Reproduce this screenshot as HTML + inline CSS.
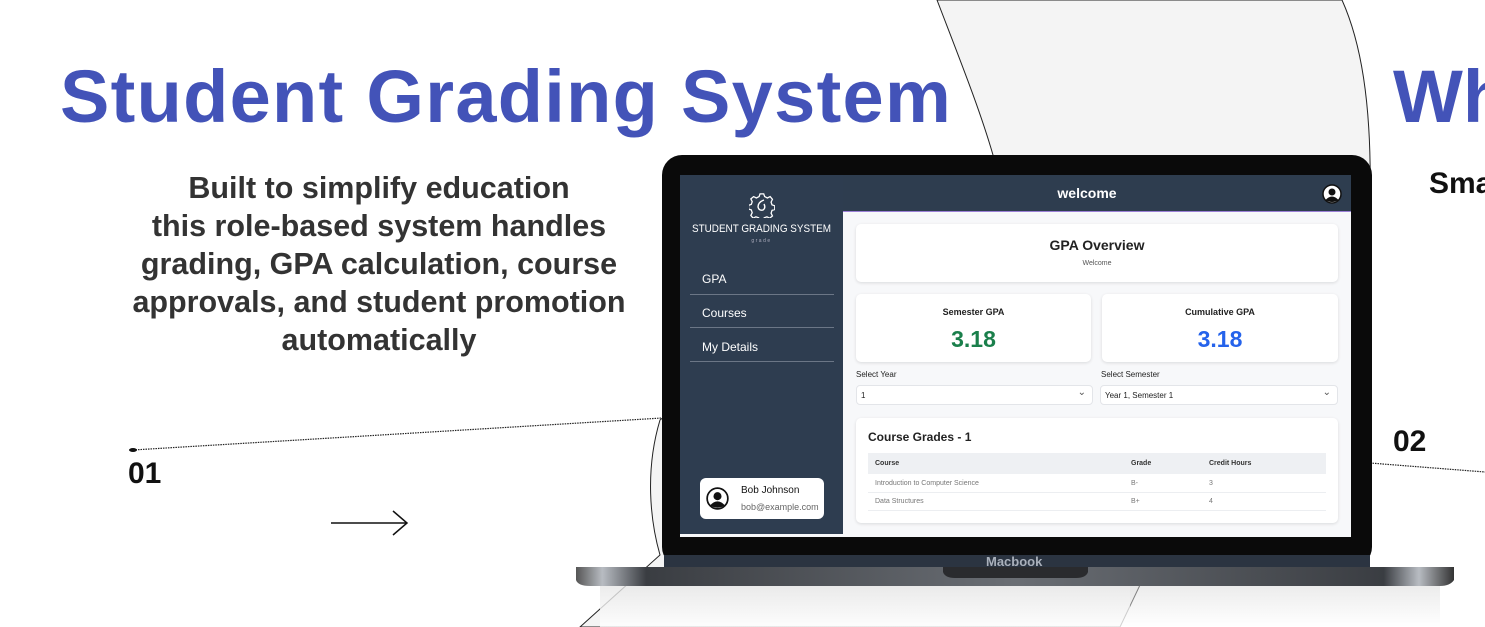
<!DOCTYPE html>
<html><head><meta charset="utf-8">
<style>
*{margin:0;padding:0;box-sizing:border-box}
body{width:1485px;height:627px;overflow:hidden;background:#fff;font-family:"Liberation Sans",sans-serif;position:relative}
.a{position:absolute;white-space:nowrap}
.card{position:absolute;background:#fff;border-radius:5px;box-shadow:0 1px 3px rgba(0,0,0,.12)}
.sel{position:absolute;background:#fff;border:1px solid #e3e5e9;border-radius:4px;font-size:8px;color:#222;padding:0 0 0 4px;line-height:19px}
.sel:after{content:"⌄";position:absolute;right:6px;top:-3px;font-size:10px;color:#555}
</style></head><body>
<svg class="a" style="left:0;top:0" width="1485" height="627">
<defs><linearGradient id="sh" x1="0" y1="0" x2="0" y2="1"><stop offset="0" stop-color="#d8d8d8"/><stop offset="1" stop-color="#fff"/></linearGradient>
<linearGradient id="base" x1="0" y1="0" x2="1" y2="0"><stop offset="0" stop-color="#555"/><stop offset=".03" stop-color="#b8bcc2"/><stop offset=".08" stop-color="#3a3d42"/><stop offset=".5" stop-color="#6a6e74"/><stop offset=".92" stop-color="#3a3d42"/><stop offset=".96" stop-color="#b8bcc2"/><stop offset="1" stop-color="#333"/></linearGradient></defs>
<path d="M937,0 C960,60 980,110 993,155 L660,420 C645,470 650,520 660,555 L580,627 L1120,627 L1140,585 L1370,200 C1372,100 1360,40 1342,0 Z" fill="#f4f4f4" stroke="#222" stroke-width="1"/>
<rect x="600" y="585" width="530" height="42" fill="#fff" opacity=".6"/>
<path d="M133,450 L662,418" stroke="#222" stroke-width="1.2" stroke-dasharray="1.5 1"/>
<ellipse cx="133" cy="450" rx="4" ry="2" fill="#111"/>
<path d="M1370,463 L1485,472" stroke="#222" stroke-width="1.2" stroke-dasharray="1.5 1"/>
<path d="M331,523 H407 M393,511 L407,523 L393,535" stroke="#111" stroke-width="1.5" fill="none"/>
<rect x="600" y="585" width="840" height="42" fill="url(#sh)" opacity=".5"/>
<rect x="662" y="155" width="710" height="412" rx="20" fill="#0a0a0a"/>
<rect x="664" y="555" width="706" height="12" fill="#2b3441"/>
<path d="M576,567 H1454 V580 Q1450,586 1440,586 H590 Q578,586 576,580 Z" fill="url(#base)"/>
<path d="M943,567 H1088 V572 Q1086,578 1076,578 H955 Q945,578 943,572 Z" fill="#2a2b2e"/>
</svg>
<div class="a" style="left:986px;top:554px;font-size:13px;color:#a9b0bb;font-weight:bold">Macbook</div>

<div class="a" style="left:60px;top:54px;font-size:74px;font-weight:bold;color:#4353b8;letter-spacing:1.3px">Student Grading System</div>
<div class="a" style="left:1393px;top:54px;font-size:74px;font-weight:bold;color:#4353b8">Wh</div>
<div class="a" style="left:1429px;top:167px;font-size:30px;font-weight:bold;color:#111">Sma</div>
<div class="a" style="left:1393px;top:425px;font-size:30px;font-weight:bold;color:#111">02</div>
<div class="a" style="left:128px;top:457px;font-size:30px;font-weight:bold;color:#111">01</div>
<div class="a" style="left:79px;top:169px;width:600px;text-align:center;font-size:30.5px;line-height:38px;color:#333;font-weight:bold;white-space:normal">Built to simplify education<br>this role-based system handles<br>grading, GPA calculation, course<br>approvals, and student promotion<br>automatically</div>

<!-- screen -->
<div class="a" style="left:680px;top:175px;width:671px;height:362px;background:#f7f8fa"></div>
<div class="a" style="left:680px;top:175px;width:163px;height:359px;background:#2e3d50"></div>
<div class="a" style="left:843px;top:175px;width:508px;height:37px;background:#2e3d4f;border-bottom:1px solid #9b7fd6"></div>
<div class="a" style="left:843px;top:185px;width:488px;text-align:center;color:#fff;font-weight:bold;font-size:14px">welcome</div>
<svg class="a" style="left:1322px;top:184px" width="20" height="20" viewBox="0 0 20 20"><circle cx="10" cy="10" r="9" fill="#fff" stroke="#111" stroke-width="1.5"/><circle cx="10" cy="8" r="3.5" fill="#111"/><path d="M3.5,16 Q10,9 16.5,16 Q10,20 3.5,16Z" fill="#111"/></svg>
<svg class="a" style="left:749px;top:192px" width="26" height="26" viewBox="0 0 26 26"><path d="M11,2 h4 l1,3 l3,1.5 l3,-1.5 l2.5,3 l-1.5,3 l1,3 l3,1 v4 l-3,1 l-1,3 l1.5,3 l-3,2.5 l-3,-1.5 l-3,1 l-1,3 h-4 l-1,-3 l-3,-1 l-3,1.5 l-2.5,-3 l1.5,-3 l-1,-3 l-3,-1 v-4 l3,-1 l1,-3 l-1.5,-3 l3,-2.5 l3,1.5 l3,-1.5 z" fill="none" stroke="#fff" stroke-width="1.4" transform="scale(.92) translate(1,0)"/><path d="M15,8 Q9,10 9,15 Q10,19 14,18 Q17,16 15,12" fill="none" stroke="#fff" stroke-width="1.4"/></svg>
<div class="a" style="left:680px;top:223px;width:163px;text-align:center;color:#fff;font-size:11px;transform:scaleX(.9)">STUDENT GRADING SYSTEM</div>
<div class="a" style="left:680px;top:238px;width:163px;text-align:center;color:#aab;font-size:5px;letter-spacing:1.5px">grade</div>
<div class="a" style="left:702px;top:272px;color:#fff;font-size:12px">GPA</div>
<div class="a" style="left:690px;top:294px;width:144px;height:1px;background:#6b7686"></div>
<div class="a" style="left:702px;top:306px;color:#fff;font-size:12px">Courses</div>
<div class="a" style="left:690px;top:327px;width:144px;height:1px;background:#6b7686"></div>
<div class="a" style="left:702px;top:340px;color:#fff;font-size:12px">My Details</div>
<div class="a" style="left:690px;top:361px;width:144px;height:1px;background:#6b7686"></div>
<div class="a" style="left:700px;top:478px;width:124px;height:41px;background:#fff;border-radius:6px"></div>
<svg class="a" style="left:706px;top:487px" width="23" height="23" viewBox="0 0 20 20"><circle cx="10" cy="10" r="9" fill="#fff" stroke="#111" stroke-width="1.5"/><circle cx="10" cy="8" r="3.5" fill="#111"/><path d="M3.5,16 Q10,9 16.5,16 Q10,20 3.5,16Z" fill="#111"/></svg>
<div class="a" style="left:741px;top:485px;font-size:10px;color:#111">Bob Johnson</div>
<div class="a" style="left:741px;top:502px;font-size:9px;color:#666">bob@example.com</div>

<div class="card" style="left:856px;top:224px;width:482px;height:58px"></div>
<div class="a" style="left:856px;top:237px;width:482px;text-align:center;font-size:14px;font-weight:bold;color:#222">GPA Overview</div>
<div class="a" style="left:856px;top:260px;width:482px;text-align:center;font-size:7px;color:#555">Welcome</div>
<div class="card" style="left:856px;top:294px;width:235px;height:68px"></div>
<div class="card" style="left:1102px;top:294px;width:236px;height:68px"></div>
<div class="a" style="left:856px;top:307px;width:235px;text-align:center;font-size:9px;font-weight:bold;color:#222">Semester GPA</div>
<div class="a" style="left:1102px;top:307px;width:236px;text-align:center;font-size:9px;font-weight:bold;color:#222">Cumulative GPA</div>
<div class="a" style="left:856px;top:326px;width:235px;text-align:center;font-size:23px;font-weight:bold;color:#1a7f4b">3.18</div>
<div class="a" style="left:1102px;top:326px;width:236px;text-align:center;font-size:23px;font-weight:bold;color:#2563eb">3.18</div>
<div class="a" style="left:856px;top:370px;font-size:8px;color:#222">Select Year</div>
<div class="a" style="left:1101px;top:370px;font-size:8px;color:#222">Select Semester</div>
<div class="sel" style="left:856px;top:385px;width:237px;height:20px">1</div>
<div class="sel" style="left:1100px;top:385px;width:238px;height:20px">Year 1, Semester 1</div>
<div class="card" style="left:856px;top:418px;width:482px;height:105px"></div>
<div class="a" style="left:868px;top:430px;font-size:12px;font-weight:bold;color:#222">Course Grades - 1</div>
<div class="a" style="left:868px;top:453px;width:458px;height:21px;background:#eef0f3"></div>
<div class="a" style="left:875px;top:460px;font-size:7px;font-weight:bold;color:#333">Course</div>
<div class="a" style="left:1131px;top:460px;font-size:7px;font-weight:bold;color:#333">Grade</div>
<div class="a" style="left:1209px;top:460px;font-size:7px;font-weight:bold;color:#333">Credit Hours</div>
<div class="a" style="left:868px;top:492px;width:458px;height:1px;background:#eceef1"></div>
<div class="a" style="left:868px;top:510px;width:458px;height:1px;background:#eceef1"></div>
<div class="a" style="left:875px;top:480px;font-size:7px;color:#777">Introduction to Computer Science</div>
<div class="a" style="left:1131px;top:480px;font-size:7px;color:#777">B-</div>
<div class="a" style="left:1209px;top:480px;font-size:7px;color:#777">3</div>
<div class="a" style="left:875px;top:498px;font-size:7px;color:#777">Data Structures</div>
<div class="a" style="left:1131px;top:498px;font-size:7px;color:#777">B+</div>
<div class="a" style="left:1209px;top:498px;font-size:7px;color:#777">4</div>
</body></html>
